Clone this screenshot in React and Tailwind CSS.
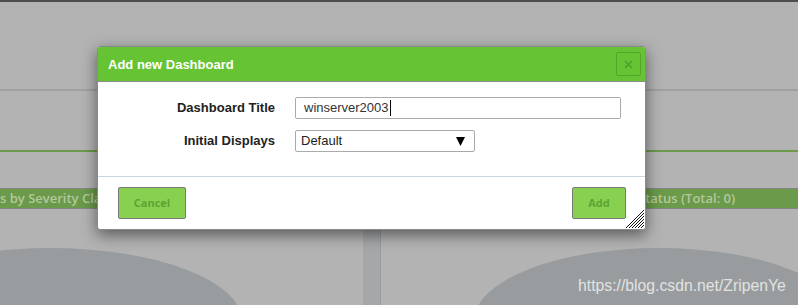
import React from 'react';

const sans = { fontFamily: '"Liberation Sans", Arial, sans-serif' };
const soft = { fontFamily: '"Open Sans", Lato, sans-serif' };

function PanelHeader({ children, className = '' }) {
  return (
    <div
      className={`h-[21px] border-y border-[#868686] bg-[#6a9a4a] text-[13px] font-semibold leading-[19px] text-[#b5c89c] whitespace-nowrap overflow-hidden ${className}`}
      style={soft}
    >
      {children}
    </div>
  );
}

function Pie({ width, cx, rx }) {
  return (
    <svg width={width} height="97" className="block">
      <ellipse cx={cx} cy="112" rx={rx} ry="73" fill="#989c9e" />
    </svg>
  );
}

function ResizeGrip() {
  return (
    <svg width="20" height="20" viewBox="0 0 20 20" className="absolute right-[1px] bottom-[1px]">
      {[2, 5, 8, 11, 14, 17].map(i => (
        <line key={i} x1={i} y1="20" x2="20" y2={i} stroke="#111" strokeWidth="1" />
      ))}
    </svg>
  );
}

export default function App() {
  return (
    <div className="relative w-[798px] h-[305px] overflow-hidden bg-[#b3b3b3]">
      {/* page behind the modal */}
      <div className="h-[2px] bg-[#4d4d4d]" />
      <div className="h-[87px]" />
      <div className="h-[2px] bg-[#a0a0a0]" />
      <div className="h-[59px]" />
      <div className="h-[2px] bg-[#6a9a4a]" />
      <div className="h-[36px]" />
      <div className="flex">
        <div className="w-[363px]">
          <PanelHeader>s by Severity Class</PanelHeader>
          <Pie width={363} cx={50} rx={192} />
        </div>
        <div className="w-[17px] bg-[#a5a7a8]" />
        <div className="w-px bg-[#9a9c9d]" />
        <div className="flex-1">
          <PanelHeader className="pl-[257px]">Status (Total: 0)</PanelHeader>
          <Pie width={417} cx={278} rx={185} />
        </div>
      </div>

      {/* modal */}
      <div
        className="absolute left-[97px] top-[46px] w-[549px] rounded-[3px] border border-[#8a8a8a] bg-white shadow-[0_5px_15px_rgba(0,0,0,0.5)]"
        style={sans}
      >
        <div className="flex h-[35px] items-center justify-between border-b border-[#8a8a8a] bg-[#66c333] pl-[10px] pr-[4px] rounded-t-[2px]">
          <span className="pt-[1px] text-[13px] font-bold text-white">Add new Dashboard</span>
          <button className="flex h-[24px] w-[25px] items-center justify-center rounded-[2px] border border-[#53a52b]">
            <svg width="9" height="9" viewBox="0 0 9 9">
              <path d="M1 1L8 8M8 1L1 8" stroke="#4c9a2a" strokeWidth="1.3" />
            </svg>
          </button>
        </div>

        <div className="grid grid-cols-[177px_1fr] items-center gap-x-[20px] gap-y-[11px] pt-[15px] pb-[24px] text-[13px]">
          <label className="text-right font-bold text-[#222]">Dashboard Title</label>
          <div className="flex h-[22px] w-[326px] items-center rounded-[2px] border border-[#aaa] pl-[8px] text-[#333]">
            winserver2003
            <span className="ml-px h-[16px] w-px bg-black" />
          </div>
          <label className="text-right font-bold text-[#222]">Initial Displays</label>
          <div className="flex h-[22px] w-[180px] items-center justify-between rounded-[2px] border border-[#aaa] pl-[5px] pr-[9px] text-[#222]">
            <span>Default</span>
            <svg width="9" height="9" viewBox="0 0 9 9">
              <path d="M0 0H9L4.5 9Z" fill="#000" />
            </svg>
          </div>
        </div>

        <div className="relative flex justify-between border-t border-[#c9d6df] pt-[10px] pb-[10px] pl-[20px] pr-[19px]">
          <button
            className="h-[32px] w-[68px] rounded-[2px] border border-[#7a7a7a] bg-[#88d150] text-[11px] font-bold text-[#5aa434]"
            style={soft}
          >
            Cancel
          </button>
          <button
            className="h-[32px] w-[54px] rounded-[2px] border border-[#7a7a7a] bg-[#88d150] text-[11px] font-bold text-[#5aa434]"
            style={soft}
          >
            Add
          </button>
          <ResizeGrip />
        </div>
      </div>

      {/* watermark */}
      <div
        className="absolute left-[578px] top-[278px] text-[15.75px] leading-none text-[#ececec]/90 whitespace-nowrap"
        style={sans}
      >
        https://blog.csdn.net/ZripenYe
      </div>
    </div>
  );
}
